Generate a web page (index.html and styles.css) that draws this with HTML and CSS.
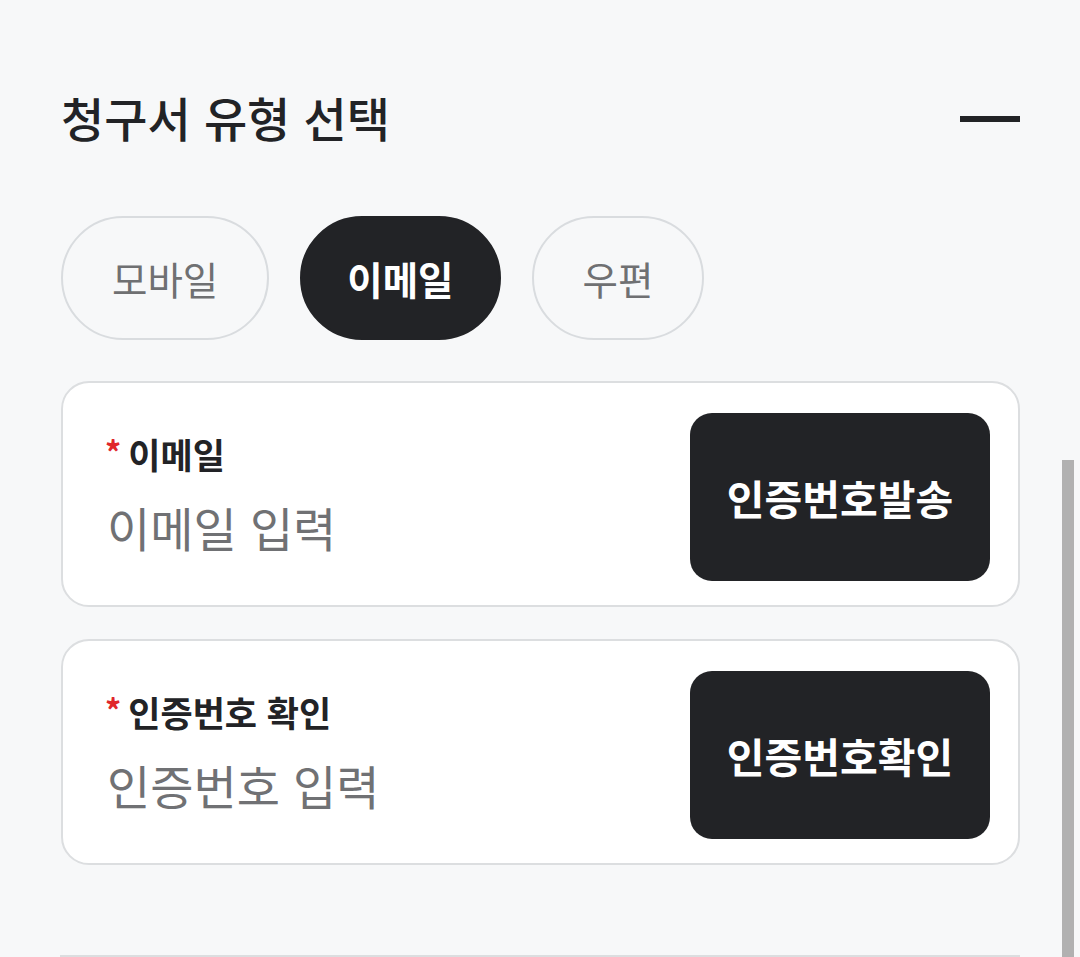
FILE: index.html
```html
<!DOCTYPE html>
<html lang="ko">
<head>
<meta charset="utf-8">
<link rel="stylesheet" href="styles.css">
</head>
<body>
<main class="page">
  <div class="header">
    <h2 class="title">청구서 유형 선택</h2>
    <span class="collapse" aria-label="접기"></span>
  </div>
  <div class="tabs">
    <button class="tab">모바일</button>
    <button class="tab active">이메일</button>
    <button class="tab">우편</button>
  </div>
  <div class="fields">
    <div class="card">
      <div class="field">
        <label class="label"><span class="req">*</span>이메일</label>
        <input class="input" type="text" placeholder="이메일 입력">
      </div>
      <button class="action">인증번호발송</button>
    </div>
    <div class="card">
      <div class="field">
        <label class="label"><span class="req">*</span>인증번호 확인</label>
        <input class="input" type="text" placeholder="인증번호 입력">
      </div>
      <button class="action">인증번호확인</button>
    </div>
  </div>
  <div class="divider"></div>
</main>
<div class="scrollbar"></div>
</body>
</html>
```
FILE: styles.css
```css
html, body {
  margin: 0;
  padding: 0;
  background: #f7f8f9;
  height: 957px;
  overflow: hidden;
}
body {
  font-family: "Noto Sans CJK KR", "Noto Sans", sans-serif;
  color: #222326;
}
.page {
  padding: 85px 60px 0 61px;
}
.header {
  display: flex;
  align-items: center;
  justify-content: space-between;
  height: 64px;
}
.title {
  margin: 0;
  font-size: 47px;
  font-weight: 500;
  line-height: 64px;
  color: #222326;
}
.collapse {
  display: block;
  width: 60px;
  height: 6px;
  background: #222326;
  margin-top: 4px;
}
.tabs {
  display: flex;
  gap: 31px;
  margin-top: 67px;
}
.tab {
  height: 124px;
  box-sizing: border-box;
  padding: 0 49px;
  border: 2px solid #d9dcdf;
  border-radius: 62px;
  background: #f7f8f9;
  font-family: inherit;
  font-size: 38.5px;
  font-weight: 400;
  color: #6f7072;
  display: flex;
  align-items: center;
  justify-content: center;
  line-height: 1;
}
.tab.active {
  padding: 0 45px;
  background: #222326;
  border-color: #222326;
  color: #ffffff;
  font-weight: 700;
}
.fields {
  display: flex;
  flex-direction: column;
  gap: 32px;
  margin-top: 41px;
}
.card {
  height: 226px;
  box-sizing: border-box;
  border: 2px solid #dcdee0;
  border-radius: 28px;
  background: #ffffff;
  display: flex;
  align-items: center;
  justify-content: space-between;
  padding: 0 28px 0 42px;
}
.field {
  display: flex;
  flex-direction: column;
  gap: 20px;
}
.label {
  font-size: 35px;
  font-weight: 700;
  color: #222326;
  line-height: 46px;
  height: 46px;
  display: flex;
  align-items: flex-start;
}
.req {
  color: #e0262b;
  font-size: 32px;
  margin-right: 7px;
  line-height: 40px;
}
.input {
  border: none;
  outline: none;
  padding: 0;
  margin: 0 0 0 2px;
  background: transparent;
  font-family: inherit;
  font-size: 47px;
  line-height: 60px;
  height: 60px;
  width: 460px;
  color: #222326;
}
.input::placeholder {
  color: #707174;
}
.action {
  width: 300px;
  height: 168px;
  border: none;
  border-radius: 22px;
  background: #222326;
  color: #ffffff;
  font-family: inherit;
  font-size: 41px;
  font-weight: 700;
  margin-top: 6px;
}
.divider {
  height: 2px;
  background: #dcdee0;
  margin-top: 90px;
  margin-left: -1px;
}
.scrollbar {
  position: fixed;
  left: 1062px;
  top: 460px;
  width: 12px;
  bottom: 0;
  background: #b1b1b1;
}
```
